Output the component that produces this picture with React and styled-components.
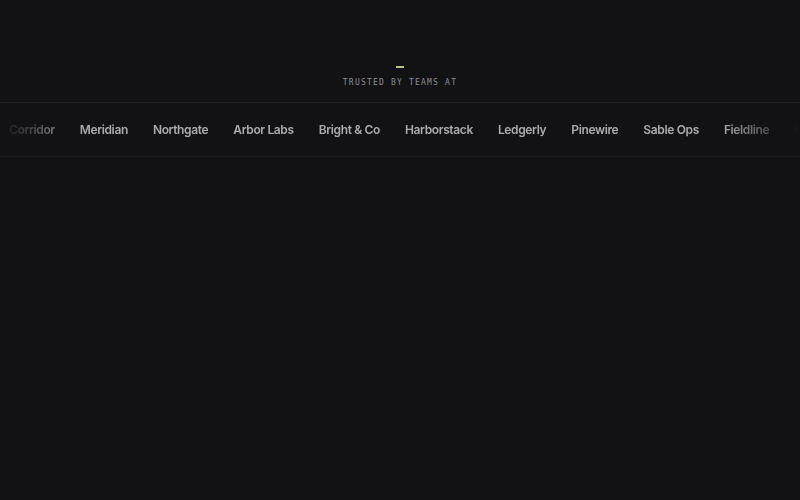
import React from "react";
import styled, { createGlobalStyle, keyframes } from "styled-components";

const GlobalStyle = createGlobalStyle`
  html, body {
    margin: 0;
    padding: 0;
    background: #121214;
  }
  body {
    font-family: Inter, "Noto Sans", sans-serif;
    -webkit-font-smoothing: antialiased;
  }
`;

const Page = styled.div`
  min-height: 500px;
  background: #121214;
  padding-top: 66px;
  box-sizing: border-box;
`;

const Heading = styled.div`
  display: flex;
  flex-direction: column;
  align-items: center;
  gap: 10px;
  padding-bottom: 14px;
`;

const Accent = styled.span`
  width: 8px;
  height: 2px;
  background: #b9c48c;
`;

const Label = styled.p`
  margin: 0;
  font-family: "DejaVu Sans Mono", "Liberation Mono", monospace;
  font-size: 8px;
  line-height: 10px;
  letter-spacing: 1.2px;
  color: #8e8e92;
  text-transform: uppercase;
`;

const Band = styled.section`
  border-top: 1px solid #1f1f22;
  border-bottom: 1px solid #1b1b1e;
  height: 53px;
  overflow: hidden;
  display: flex;
  align-items: center;
`;

const Viewport = styled.div`
  flex: 1;
  overflow: hidden;
  mask-image: linear-gradient(
    to right,
    transparent 0,
    #000 85px,
    #000 720px,
    transparent 800px
  );
`;

const scroll = keyframes`
  from { transform: translateX(0); }
  to { transform: translateX(-50%); }
`;

const Track = styled.ul`
  list-style: none;
  margin: 0 0 0 9px;
  padding: 0;
  display: flex;
  gap: 25px;
  white-space: nowrap;
  animation: ${scroll} 40s linear infinite;
  animation-play-state: paused;
`;

const Logo = styled.li`
  font-size: 12px;
  font-weight: 600;
  letter-spacing: -0.03em;
  color: #acacb0;
`;

const logos = [
  "Corridor",
  "Meridian",
  "Northgate",
  "Arbor Labs",
  "Bright & Co",
  "Harborstack",
  "Ledgerly",
  "Pinewire",
  "Sable Ops",
  "Fieldline",
];

export default function App() {
  return (
    <>
      <GlobalStyle />
      <Page>
        <Heading>
          <Accent />
          <Label>Trusted by teams at</Label>
        </Heading>
        <Band>
          <Viewport>
            <Track>
              {[...logos, ...logos].map((name, i) => (
                <Logo key={i}>{name}</Logo>
              ))}
            </Track>
          </Viewport>
        </Band>
      </Page>
    </>
  );
}
